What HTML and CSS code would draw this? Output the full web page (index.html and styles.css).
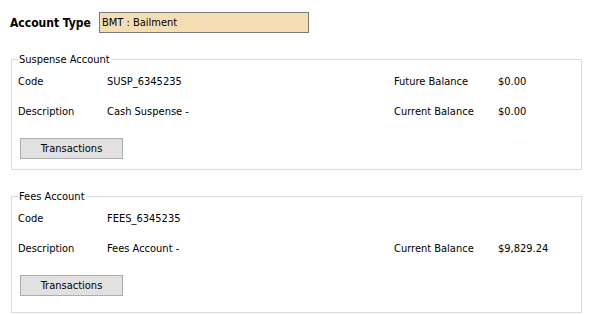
FILE: index.html
```html
<!DOCTYPE html>
<html>
    <head>
        <meta charset="utf-8">
        <title>Account Detail</title>
        <link rel="stylesheet" href="styles.css">
    </head>
<body>
    <div class="type-row">
        <label class="type-label">Account Type</label>
        <div class="type-box">BMT : Bailment</div>
    </div>

    <fieldset class="account">
        <legend>Suspense Account</legend>
        <div class="grid">
            <span>Code</span><span>SUSP_6345235</span><span>Future Balance</span><span>$0.00</span>
            <span>Description</span><span>Cash Suspense -</span><span>Current Balance</span><span>$0.00</span>
        </div>
        <button type="button" class="btn">Transactions</button>
    </fieldset>

    <fieldset class="account account-last">
        <legend>Fees Account</legend>
        <div class="grid">
            <span>Code</span><span>FEES_6345235</span><span></span><span></span>
            <span>Description</span><span>Fees Account -</span><span>Current Balance</span><span>$9,829.24</span>
        </div>
        <button type="button" class="btn">Transactions</button>
    </fieldset>
</body>
</html>
```

FILE: styles.css
```css
body {
    margin: 0;
    background: #fff;
    color: #000;
    font-family: "DejaVu Sans Condensed", "Liberation Sans", sans-serif;
    font-size: 11px;
}
.type-row {
    display: flex;
    align-items: center;
    padding: 12px 0 0 10px;
    height: 21px;
}
.type-label {
    width: 89px;
    font-weight: bold;
    font-size: 12px;
}
.type-box {
    box-sizing: border-box;
    width: 210px;
    height: 21px;
    line-height: 19px;
    padding-left: 2px;
    border: 1px solid #7a7a7a;
    background: #f5deb3;
}
.account {
    margin: 20px 10px 0 11px;
    padding: 0 0 10px 6px;
    border: 1px solid #dcdcdc;
    width: 563px;
}
.account legend {
    padding: 0 1px;
    line-height: 13px;
}
.account-last {
    margin-top: 20px;
    padding-bottom: 16px;
}
.grid {
    display: grid;
    grid-template-columns: 89px 287px 104px 1fr;
    grid-auto-rows: 30px;
    align-items: center;
}
.btn {
    display: block;
    margin: 12px 0 0 2px;
    width: 103px;
    height: 21px;
    padding: 0;
    border: 1px solid #adadad;
    background: #e1e1e1;
    font: inherit;
    color: #000;
}
```
